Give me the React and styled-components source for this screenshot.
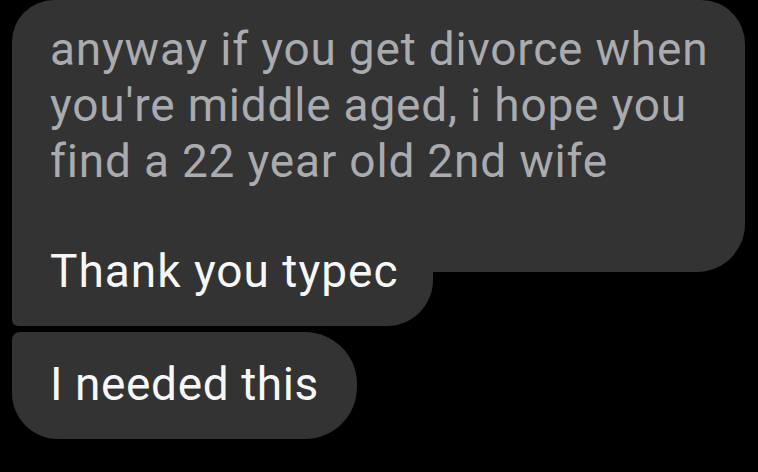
import React from "react";
import styled, { createGlobalStyle } from "styled-components";

const Global = createGlobalStyle`
  html, body { margin: 0; padding: 0; background: #000; }
  body { font-family: Roboto, "Noto Sans", sans-serif; -webkit-font-smoothing: antialiased; }
`;

const Thread = styled.div`
  display: flex;
  flex-direction: column;
  align-items: flex-start;
  gap: 6px;
  padding-left: 12px;
  width: 758px;
  height: 472px;
  box-sizing: border-box;
  overflow: hidden;
`;

const Message = styled.div`
  display: flex;
  flex-direction: column;
  align-items: flex-start;
`;

const QuoteBlock = styled.div`
  width: 733px;
  box-sizing: border-box;
  background: #333333;
  border-radius: 42px 44px 48px 0;
  padding: 21px 38px 83px 38px;
  color: #a9abb0;
  font-size: 46px;
  line-height: 56px;
  letter-spacing: 0.8px;
`;

const Line = styled.div`
  white-space: nowrap;
`;

const Part = styled.div`
  background: #333333;
  color: #f7f7f7;
  font-size: 46px;
  line-height: 56px;
  letter-spacing: ${(p) => p.$tracking || "0.8px"};
  white-space: nowrap;
  border-radius: ${(p) => p.$radius};
  padding: ${(p) => p.$padding};
  margin-top: ${(p) => p.$overlap || "0"};
`;

export default function App() {
  return (
    <>
      <Global />
      <Thread>
        <Message>
          <QuoteBlock>
            <Line>anyway if you get divorce when</Line>
            <Line>you're middle aged, i hope you</Line>
            <Line>find a 22 year old 2nd wife</Line>
          </QuoteBlock>
          <Part $radius="0 0 46px 6px" $padding="0 35px 27px 38px" $overlap="-29px" $tracking="1px">
            Thank you typec
          </Part>
        </Message>
        <Part $radius="8px 52px 52px 46px" $padding="24px 38px 27px 38px" $tracking="0.6px">
          I needed this
        </Part>
      </Thread>
    </>
  );
}
